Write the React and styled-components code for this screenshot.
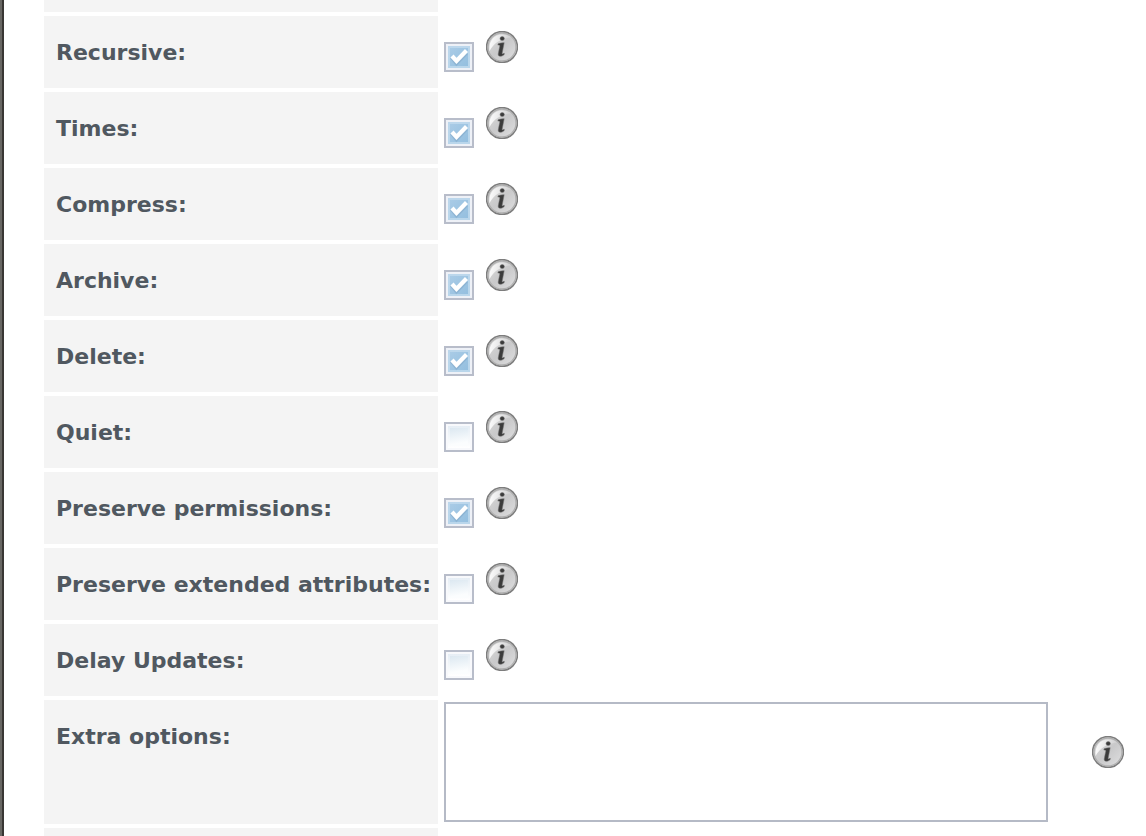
import React, { useState } from "react";
import styled, { createGlobalStyle } from "styled-components";

const GlobalStyle = createGlobalStyle`
  * { box-sizing: border-box; }
  body { margin: 0; background: #fff; }
`;

const Page = styled.main`
  min-height: 100vh;
  padding-left: 42px;
  border-left: 2px solid #686763;
  box-shadow: inset 2px 0 #393734;
  background: #fff;
`;

const Form = styled.form`
  display: flex;
  flex-direction: column;
  gap: 4px;
  font-family: Verdana, "DejaVu Sans", sans-serif;
`;

const Row = styled.div`
  display: grid;
  grid-template-columns: 394px minmax(0, 1fr);
  column-gap: 6px;
  min-height: ${(p) => p.$height}px;
`;

const Label = styled.label`
  padding: 21px 12px 19px;
  background: #f4f4f4;
  color: #505860;
  font-size: 22px;
  line-height: 32px;
  font-weight: bold;
  white-space: nowrap;
`;

const EmptyLabel = styled.div`
  background: #f4f4f4;
`;

const CheckField = styled.div`
  display: flex;
  align-items: flex-start;
  gap: 12px;
  padding-top: 15px;
`;

const CheckBox = styled.span`
  display: grid;
  width: 30px;
  height: 30px;
  margin-top: 11px;
  > * { grid-area: 1 / 1; }
`;

const CheckInput = styled.input`
  appearance: none;
  width: 30px;
  height: 30px;
  margin: 0;
  border: 2px solid #b8bdca;
  background:
    linear-gradient(135deg, #a9cbe6, #94bfdf) center / 18px 18px no-repeat,
    linear-gradient(#bcd7ec, #b9d6eb) center / 22px 22px no-repeat,
    #eef1f7;
  &:not(:checked) {
    background:
      linear-gradient(170deg, #dce8f1, #fbfdfe 80%) center / 18px 18px no-repeat,
      linear-gradient(#e6eef5, #fff) center / 22px 22px no-repeat,
      #f8f9fc;
  }
`;

const Tick = styled.svg`
  pointer-events: none;
`;

const TextField = styled.div`
  display: flex;
  align-items: flex-start;
  gap: 44px;
  padding: 2px 22px 2px 0;
`;

const TextArea = styled.textarea`
  flex: 1;
  min-width: 0;
  height: 120px;
  padding: 6px;
  border: 2px solid #b5bac6;
  border-radius: 0;
  background: #fff;
  color: #505860;
  font: inherit;
  font-size: 22px;
  resize: none;
`;

const InfoButton = styled.button`
  flex: none;
  width: 32px;
  height: 32px;
  margin-top: ${(p) => p.$top || 0}px;
  padding: 0;
  border: 0;
  background: none;
  svg { display: block; }
`;

function Info({ id, label, top }) {
  const shade = `shade-${id}`;
  return (
    <InfoButton type="button" aria-label={`About ${label}`} $top={top}>
      <svg width="32" height="32" viewBox="0 0 32 32">
        <defs>
          <linearGradient id={shade} x1="0" y1="0" x2="1" y2="1">
            <stop offset="0" stopColor="#dcdcdc" />
            <stop offset=".5" stopColor="#c9c9ca" />
            <stop offset="1" stopColor="#e2e2e3" />
          </linearGradient>
          <linearGradient id={`${shade}-gloss`} x1="0" y1="0" x2="1" y2="0">
            <stop offset="0" stopColor="#fff" stopOpacity=".9" />
            <stop offset="1" stopColor="#fff" stopOpacity=".1" />
          </linearGradient>
        </defs>
        <circle cx="16" cy="16" r="15.4" fill={`url(#${shade})`} stroke="#7d7d7d" strokeWidth="1.6" />
        <circle cx="16" cy="16" r="14" fill="none" stroke="#b0b0b0" strokeWidth="1.3" />
        <path d="M3.5 20C2.5 10 8 3.5 16 3.5c4 0 7 1 9 3C15 7.5 8 12 3.5 20z" fill={`url(#${shade}-gloss)`} />
        <g fill="#3b3b3b" stroke="#777" strokeOpacity=".5" strokeWidth="1">
          <ellipse cx="16.2" cy="7.6" rx="2.2" ry="2" />
          <path d="M12 12.8c2-.8 3.900-1.100 6.200-1.100l-1.900 9.900c-.2 1.200 0 1.600.5 1.400.5-.2.8-.5 1.300-.9l.3 1.100c-1.300 1.400-2.700 2.100-4.200 2.100-1.700 0-2.300-1.100-1.900-3l1.500-7.200c.1-.7-.5-1-1.900-1z" />
        </g>
      </svg>
    </InfoButton>
  );
}

const OPTIONS = [
  ["recursive", "Recursive", true],
  ["times", "Times", true],
  ["compress", "Compress", true],
  ["archive", "Archive", true],
  ["delete", "Delete", true],
  ["quiet", "Quiet", false],
  ["permissions", "Preserve permissions", true],
  ["attributes", "Preserve extended attributes", false],
  ["delay", "Delay Updates", false],
];

function OptionRow({ id, label, initial }) {
  const [checked, setChecked] = useState(initial);
  return (
    <Row $height={72}>
      <Label htmlFor={id}>{label}:</Label>
      <CheckField>
        <CheckBox>
          <CheckInput id={id} type="checkbox" checked={checked} onChange={(e) => setChecked(e.target.checked)} />
          {checked && (
            <Tick width="30" height="30" viewBox="0 0 30 30" aria-hidden="true">
              <path d="M8 15L12.500 20.500L22 10.500" fill="none" stroke="#7fa5c6" strokeOpacity=".5" strokeWidth="5" />
              <path d="M8 14L12.500 19L22.500 8.500" fill="none" stroke="#fff" strokeWidth="4.200" />
            </Tick>
          )}
        </CheckBox>
        <Info id={id} label={label} />
      </CheckField>
    </Row>
  );
}

export default function App() {
  return (
    <>
      <GlobalStyle />
      <Page>
        <Form>
          <Row $height={12}><EmptyLabel /></Row>
          {OPTIONS.map(([id, label, initial]) => (
            <OptionRow key={id} id={id} label={label} initial={initial} />
          ))}
          <Row $height={124}>
            <Label htmlFor="extra">Extra options:</Label>
            <TextField>
              <TextArea id="extra" />
              <Info id="extra-info" label="Extra options" top={34} />
            </TextField>
          </Row>
          <Row $height={8}><EmptyLabel /></Row>
        </Form>
      </Page>
    </>
  );
}
